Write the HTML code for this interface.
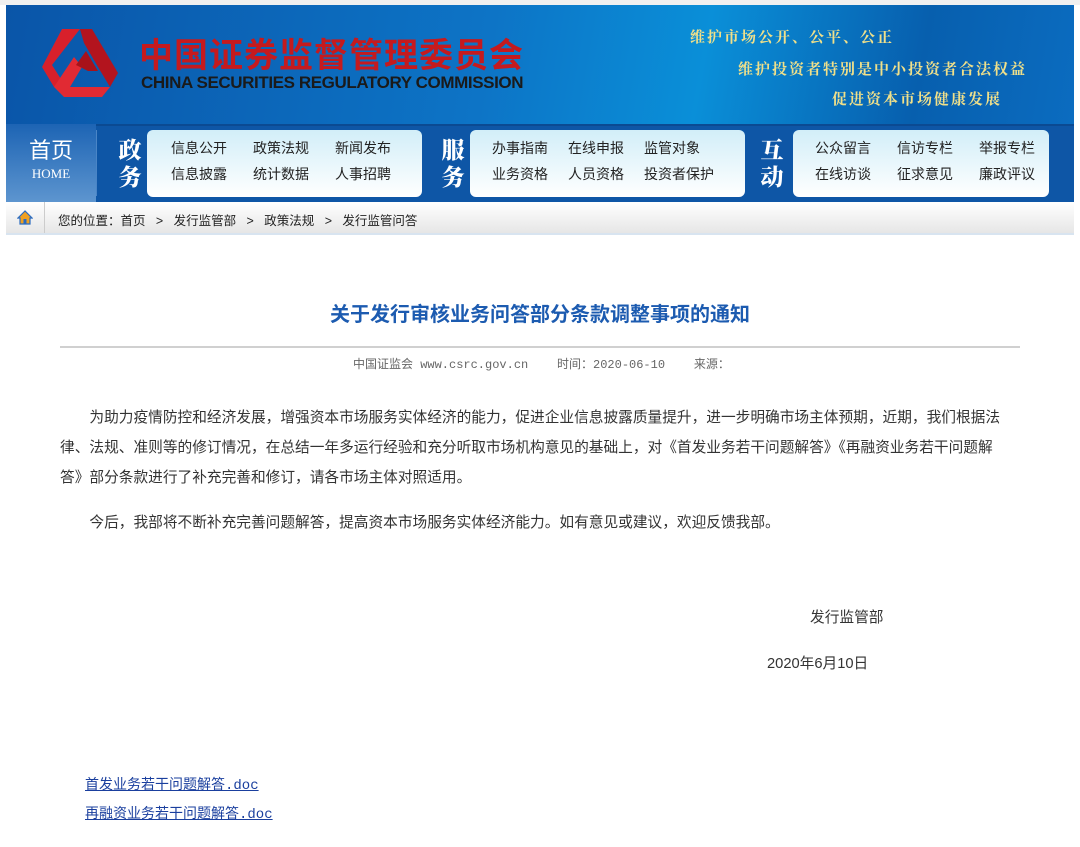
<!DOCTYPE html>
<html><head><meta charset="utf-8">
<style>
*{margin:0;padding:0;box-sizing:border-box}
body{width:1080px;height:847px;background:#fff;font-family:"Liberation Sans","Noto Sans CJK SC",sans-serif;position:relative;overflow:hidden;color:#333}
.abs{position:absolute}
#top{left:0;top:0;width:1080px;height:5px;background:#f0f0f0}
#banner{left:6px;top:5px;width:1068px;height:119px;background:linear-gradient(100deg,#0a55a8 0%,#0d74c6 45%,#0a8fd8 65%,#075fae 85%,#0b6cc0 100%)}
#nav{left:6px;top:124px;width:1068px;height:78px;background:#0e56a6;border-top:2px solid #0b4a92}
.home{left:6px;top:124px;width:90px;height:78px;background:linear-gradient(#1d64b4,#5d95cf);color:#fff;text-align:center}
.vt{color:#fff;font-weight:900;font-size:23px;line-height:27px;font-family:"Noto Serif CJK SC",serif;width:30px;text-align:center}
.box{background:linear-gradient(#d2eef8,#fff);border-radius:6px;top:130px;height:67px;font-size:14px;color:#222}
.box span{position:absolute}
#crumb{left:6px;top:202px;width:1068px;height:33px;background:linear-gradient(#fff,#e6e6e6);border-bottom:2px solid #d8e4f0;font-size:12.5px;color:#222}
.p{font-size:14.7px;color:#333;line-height:30px;left:60px;white-space:nowrap}
a{color:#1a3f9e;text-decoration:underline;font-size:14px;font-family:"Liberation Mono","Noto Sans CJK SC",monospace}
</style></head><body>
<div id="top" class="abs"></div>
<div id="banner" class="abs"></div>
<svg class="abs" style="left:40px;top:27px" width="80" height="72" viewBox="0 0 80 72">
<polygon points="40,2 22,2 2,40 14,60 26,60 12,38" fill="#d8202b"/>
<polygon points="40,2 52,2 78,46 70,60 58,40 44,16" fill="#b3141e"/>
<polygon points="14,60 24,70 62,70 70,60 30,60 42,40 34,30" fill="#e12a33"/>
<polygon points="36,38 46,24 58,44 48,44" fill="#a8121a"/>
</svg>
<div class="abs" style="left:139px;top:33px;color:#c51a1e;font-size:34px;font-weight:bold;letter-spacing:1px;white-space:nowrap;font-family:'Noto Sans CJK SC',sans-serif;line-height:40px">中国证券监督管理委员会</div>
<div class="abs" style="left:141px;top:73px;color:#1a1a1a;font-size:17px;font-weight:bold;white-space:nowrap;letter-spacing:-0.4px">CHINA SECURITIES REGULATORY COMMISSION</div>
<div class="abs" style="left:690px;top:26px;color:#f0e08a;font-size:15px;font-weight:bold;letter-spacing:2px;white-space:nowrap;font-family:'Noto Serif CJK SC',serif">维护市场公开、公平、公正</div>
<div class="abs" style="left:738px;top:58px;color:#f0e08a;font-size:15px;font-weight:bold;letter-spacing:2px;white-space:nowrap;font-family:'Noto Serif CJK SC',serif">维护投资者特别是中小投资者合法权益</div>
<div class="abs" style="left:832px;top:88px;color:#f0e08a;font-size:15px;font-weight:bold;letter-spacing:2px;white-space:nowrap;font-family:'Noto Serif CJK SC',serif">促进资本市场健康发展</div>
<div id="nav" class="abs"></div>
<div class="abs home"><div style="font-size:22px;margin-top:14px;line-height:26px">首页</div><div style="font-size:13px;font-family:'Liberation Serif',serif;margin-top:2px">HOME</div></div>
<div class="abs" style="left:96px;top:130px;width:1px;height:66px;background:#4a85c6"></div>
<div class="abs vt" style="left:115px;top:135px">政<br>务</div>
<div class="abs box" style="left:147px;width:275px"><span style="left:24px;top:8px">信息公开</span><span style="left:106px;top:8px">政策法规</span><span style="left:188px;top:8px">新闻发布</span><span style="left:24px;top:34px">信息披露</span><span style="left:106px;top:34px">统计数据</span><span style="left:188px;top:34px">人事招聘</span></div>
<div class="abs vt" style="left:438px;top:135px">服<br>务</div>
<div class="abs box" style="left:470px;width:275px"><span style="left:22px;top:8px">办事指南</span><span style="left:98px;top:8px">在线申报</span><span style="left:174px;top:8px">监管对象</span><span style="left:22px;top:34px">业务资格</span><span style="left:98px;top:34px">人员资格</span><span style="left:174px;top:34px">投资者保护</span></div>
<div class="abs vt" style="left:757px;top:135px">互<br>动</div>
<div class="abs box" style="left:793px;width:256px"><span style="left:22px;top:8px">公众留言</span><span style="left:104px;top:8px">信访专栏</span><span style="left:186px;top:8px">举报专栏</span><span style="left:22px;top:34px">在线访谈</span><span style="left:104px;top:34px">征求意见</span><span style="left:186px;top:34px">廉政评议</span></div>
<div id="crumb" class="abs">
<svg class="abs" style="left:11px;top:8px" width="16" height="15" viewBox="0 0 16 15"><polygon points="8,1 1,8 3,8 3,14 13,14 13,8 15,8" fill="#f0a020" stroke="#2a6bc0" stroke-width="1.2"/><rect x="6.5" y="9" width="3" height="5" fill="#2a6bc0"/></svg>
<div class="abs" style="left:38px;top:0;width:1px;height:31px;background:#ccc"></div>
<div class="abs" style="left:52px;top:8px;white-space:nowrap">您的位置：首页 &nbsp;&nbsp;&gt;&nbsp;&nbsp; 发行监管部 &nbsp;&nbsp;&gt;&nbsp;&nbsp; 政策法规 &nbsp;&nbsp;&gt;&nbsp;&nbsp; 发行监管问答</div>
</div>
<div class="abs" style="left:0;width:1080px;top:298px;text-align:center;color:#1c5bb0;font-size:20px;font-weight:bold;font-family:'Noto Sans CJK SC',sans-serif">关于发行审核业务问答部分条款调整事项的通知</div>
<div class="abs" style="left:60px;top:346px;width:960px;height:2px;background:#d0d0d0"></div>
<div class="abs" style="left:353px;top:355px;font-size:12px;color:#666;white-space:nowrap;font-family:'Liberation Mono','Noto Sans CJK SC',monospace">中国证监会 www.csrc.gov.cn &nbsp;&nbsp;&nbsp;时间：2020-06-10 &nbsp;&nbsp;&nbsp;来源：</div>
<div class="abs p" style="top:403px">　　为助力疫情防控和经济发展，增强资本市场服务实体经济的能力，促进企业信息披露质量提升，进一步明确市场主体预期，近期，我们根据法<br>律、法规、准则等的修订情况，在总结一年多运行经验和充分听取市场机构意见的基础上，对《首发业务若干问题解答》《再融资业务若干问题解<br>答》部分条款进行了补充完善和修订，请各市场主体对照适用。</div>
<div class="abs p" style="top:508px">　　今后，我部将不断补充完善问题解答，提高资本市场服务实体经济能力。如有意见或建议，欢迎反馈我部。</div>
<div class="abs p" style="top:603px;left:810px">发行监管部</div>
<div class="abs p" style="top:649px;left:767px">2020年6月10日</div>
<a class="abs" style="left:85px;top:774px">首发业务若干问题解答.doc</a>
<a class="abs" style="left:85px;top:803px">再融资业务若干问题解答.doc</a>
</body></html>
